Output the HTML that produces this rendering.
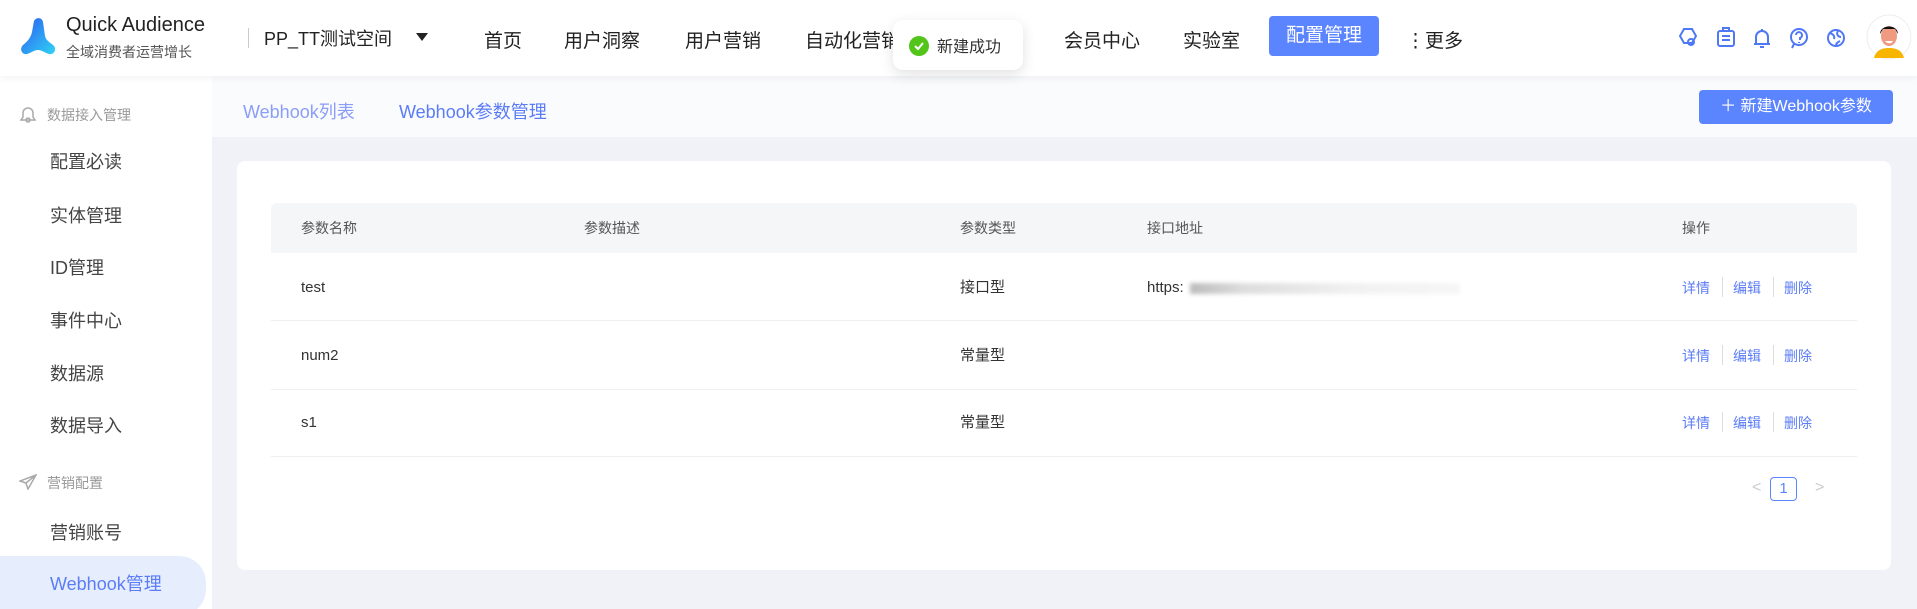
<!DOCTYPE html>
<html><head><meta charset="utf-8"><style>
*{margin:0;padding:0;box-sizing:border-box}
body{width:1917px;height:609px;overflow:hidden;background:#f1f2f7;font-family:"Liberation Sans","Noto Sans CJK SC",sans-serif;position:relative;color:#333}
.a{position:absolute;white-space:nowrap}
.hdr{position:absolute;left:0;top:0;width:1917px;height:76px;background:#fff;box-shadow:0 2px 8px rgba(0,0,0,.05);z-index:2}
.nav{font-size:19px;color:#222;top:26px}
.side{position:absolute;left:0;top:76px;width:212px;height:533px;background:#fff;overflow:hidden}
.si{font-size:18px;color:#444;left:50px}
.sg{font-size:14px;color:#999;left:47px}
.th{font-size:14px;color:#555;top:218px;line-height:20px}
.td{font-size:15px;color:#333;line-height:20px}
.op{font-size:14px;color:#5b7cf6;line-height:20px}
.sep{position:absolute;width:1px;height:20px;background:#ddd}
.rl{position:absolute;left:271px;width:1586px;height:1px;background:#f0f0f0}
</style></head><body>
<div class="hdr">
 <svg class="a" style="left:18px;top:17px" width="40" height="42" viewBox="0 0 40 42"><defs><linearGradient id="g" x1="0" y1="0" x2="1" y2="1"><stop offset="0" stop-color="#2c5cf0"/><stop offset="1" stop-color="#2fd3f5"/></linearGradient></defs><path d="M16 4c2-4 8-4 9 1l2 14c1 4 4 6 8 9 4 3 2 10-4 9-4-1-7-4-11-4s-7 3-11 4c-5 1-8-5-4-9 5-4 8-8 9-13z" fill="url(#g)"/></svg>
 <div class="a" style="left:66px;top:14px;font-size:20px;color:#222;font-weight:500">Quick Audience</div>
 <div class="a" style="left:66px;top:42px;font-size:14px;color:#555">全域消费者运营增长</div>
 <div class="a" style="left:248px;top:28px;width:1px;height:20px;background:#ccc"></div>
 <div class="a" style="left:264px;top:25px;font-size:18px;color:#222">PP_TT测试空间</div>
 <div class="a" style="left:416px;top:33px;width:0;height:0;border-left:6px solid transparent;border-right:6px solid transparent;border-top:8px solid #222"></div>
 <div class="a nav" style="left:484px">首页</div>
 <div class="a nav" style="left:564px">用户洞察</div>
 <div class="a nav" style="left:685px">用户营销</div>
 <div class="a nav" style="left:805px">自动化营销</div>
 <div class="a nav" style="left:944px;color:#ddd">内容营销</div>
 <div class="a nav" style="left:1064px">会员中心</div>
 <div class="a nav" style="left:1183px">实验室</div>
 <div class="a" style="left:1269px;top:16px;width:110px;height:40px;background:#5b84ff;border-radius:4px;color:#fff;font-size:19px;text-align:center;line-height:40px">配置管理</div>
 <div class="a nav" style="left:1406px">⋮更多</div>
 <svg class="a" style="left:1678px;top:26px" width="180" height="24" viewBox="0 0 180 24" fill="none" stroke="#4f78f5" stroke-width="2">
  <path d="M6 3h8l4 7-4 7H6L2 10z"/><circle cx="13" cy="16" r="3"/>
  <rect x="40" y="5" width="16" height="15" rx="2"/><path d="M44 10h8M44 14h8M45 5V2h6v3"/>
  <path d="M76 18h16M78 18v-7a6 6 0 0 1 12 0v7M84 3v2M82 21h4"/>
  <circle cx="121" cy="11" r="8"/><path d="M118 9a3 3 0 1 1 4 3v2M121 16v1M116 18l-2 4"/>
  <circle cx="158" cy="12" r="8"/><path d="M152 7c3 1 5 3 4 6M160 5c-2 3 0 6 3 6M158 20c0-3 2-4 4-5"/>
 </svg>
 <svg class="a" style="left:1866px;top:14px" width="46" height="46" viewBox="0 0 46 46"><circle cx="23" cy="23" r="22" fill="#fff" stroke="#eee"/><path d="M8 44c2-8 8-10 15-10s13 2 15 10z" fill="#f7b500"/><ellipse cx="23" cy="22" rx="8" ry="10" fill="#f09a82"/><path d="M14 20c0-10 18-10 18 0l-3-5h-12z" fill="#111"/><path d="M19 27h8c-1 3-6 3-8 0z" fill="#fff"/></svg>
</div>
<div class="a" style="left:893px;top:20px;width:130px;height:50px;background:#fff;border-radius:10px;box-shadow:0 4px 14px rgba(0,0,0,.12);z-index:5">
 <svg class="a" style="left:16px;top:16px" width="20" height="20" viewBox="0 0 20 20"><circle cx="10" cy="10" r="10" fill="#52c41a"/><path d="M6 10l3 3 5-6" stroke="#fff" stroke-width="2" fill="none"/></svg>
 <div class="a" style="left:44px;top:13px;font-size:16px;color:#333">新建成功</div>
</div>
<div class="side">
 <svg class="a" style="left:19px;top:30px" width="18" height="18" viewBox="0 0 18 18" fill="none" stroke="#aaa" stroke-width="1.5"><path d="M9 2a5 5 0 0 0-5 5v4l-2 3h14l-2-3V7a5 5 0 0 0-5-5z"/><circle cx="9" cy="14" r="2"/></svg>
 <div class="a sg" style="top:29px">数据接入管理</div>
 <div class="a si" style="top:72px">配置必读</div>
 <div class="a si" style="top:126px">实体管理</div>
 <div class="a si" style="top:178px">ID管理</div>
 <div class="a si" style="top:231px">事件中心</div>
 <div class="a si" style="top:284px">数据源</div>
 <div class="a si" style="top:336px">数据导入</div>
 <svg class="a" style="left:19px;top:398px" width="18" height="16" viewBox="0 0 18 16" fill="none" stroke="#aaa" stroke-width="1.5"><path d="M17 1L1 7l6 2 2 6zM7 9l10-8"/></svg>
 <div class="a sg" style="top:397px">营销配置</div>
 <div class="a si" style="top:443px">营销账号</div>
 <div class="a" style="left:0;top:480px;width:206px;height:60px;background:#e6eefe;border-radius:0 27px 27px 0"></div>
 <div class="a si" style="top:494px;color:#5b7cf6">Webhook管理</div>
</div>
<div class="a" style="left:212px;top:76px;width:1705px;height:61px;background:#fafbfd"></div>
<div class="a" style="left:243px;top:98px;font-size:18px;color:#8a9df7">Webhook列表</div>
<div class="a" style="left:399px;top:98px;font-size:18px;color:#5b7cf6">Webhook参数管理</div>
<div class="a" style="left:1699px;top:90px;width:194px;height:34px;background:#5b84ff;border-radius:4px;color:#fff;font-size:16px;line-height:34px;text-align:center">＋ 新建Webhook参数</div>
<div class="a" style="left:237px;top:161px;width:1654px;height:409px;background:#fff;border-radius:8px"></div>
<div class="a" style="left:271px;top:203px;width:1586px;height:50px;background:#f5f6f8;border-radius:6px 6px 0 0"></div>
<div class="a th" style="left:301px">参数名称</div>
<div class="a th" style="left:584px">参数描述</div>
<div class="a th" style="left:960px">参数类型</div>
<div class="a th" style="left:1147px">接口地址</div>
<div class="a th" style="left:1682px">操作</div>
<div class="a td" style="left:301px;top:278px">test</div>
<div class="a td" style="left:960px;top:278px">接口型</div>
<div class="a td" style="left:1147px;top:278px">https:</div>
<div class="a" style="left:1190px;top:283px;width:270px;height:11px;background:linear-gradient(90deg,#bbb,#ddd 20%,#f1f1f1 60%,#f6f6f6);filter:blur(2px)"></div>
<div class="rl" style="top:320px"></div>
<div class="a td" style="left:301px;top:346px">num2</div>
<div class="a td" style="left:960px;top:346px">常量型</div>
<div class="rl" style="top:389px"></div>
<div class="a td" style="left:301px;top:413px">s1</div>
<div class="a td" style="left:960px;top:413px">常量型</div>
<div class="rl" style="top:456px"></div>
<div class="a op" style="left:1682px;top:278px">详情</div><div class="sep" style="left:1722px;top:277px"></div><div class="a op" style="left:1733px;top:278px">编辑</div><div class="sep" style="left:1773px;top:277px"></div><div class="a op" style="left:1784px;top:278px">删除</div>
<div class="a op" style="left:1682px;top:346px">详情</div><div class="sep" style="left:1722px;top:345px"></div><div class="a op" style="left:1733px;top:346px">编辑</div><div class="sep" style="left:1773px;top:345px"></div><div class="a op" style="left:1784px;top:346px">删除</div>
<div class="a op" style="left:1682px;top:413px">详情</div><div class="sep" style="left:1722px;top:412px"></div><div class="a op" style="left:1733px;top:413px">编辑</div><div class="sep" style="left:1773px;top:412px"></div><div class="a op" style="left:1784px;top:413px">删除</div>
<div class="a" style="left:1752px;top:479px;font-size:16px;color:#ccc">&lt;</div>
<div class="a" style="left:1770px;top:477px;width:27px;height:24px;border:1px solid #5b84ff;border-radius:4px;color:#5b84ff;font-size:15px;text-align:center;line-height:22px">1</div>
<div class="a" style="left:1815px;top:479px;font-size:16px;color:#ccc">&gt;</div>
</body></html>
